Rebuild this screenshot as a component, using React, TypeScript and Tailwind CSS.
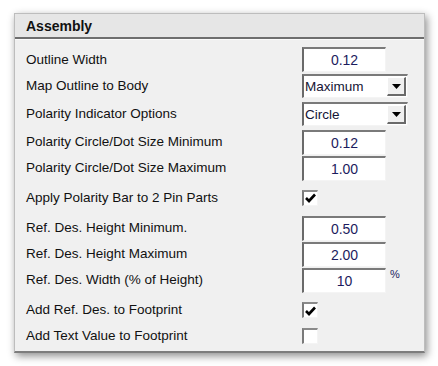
import React from "react";

const font = { fontFamily: '"Liberation Sans", Arial, sans-serif' };

function NumBox({ value }: { value: string }) {
  return (
    <div className="w-[84px] h-[25px] bg-white border-t-2 border-l-2 border-t-[#7a7a7a] border-l-[#6a6a6a] border-r border-b border-r-[#f4f4f4] border-b-[#f4f4f4] flex items-center justify-center text-[14px] text-[#1c1c5e] leading-none">
      {value}
    </div>
  );
}

function Select({ value }: { value: string }) {
  return (
    <div className="w-[106px] h-[24px] bg-white border-t-2 border-l-2 border-t-[#7a7a7a] border-l-[#6a6a6a] border-r border-b border-r-[#f4f4f4] border-b-[#f4f4f4] flex items-stretch">
      <div className="flex-1 flex items-center pl-[1px] text-[13.5px] text-[#151535] leading-none">{value}</div>
      <div className="w-[19px] my-[1px] mr-[1px] bg-[#f0f0f0] border-t border-l border-t-white border-l-white border-r-2 border-b-2 border-r-[#6a6a6a] border-b-[#6a6a6a] flex items-center justify-center">
        <svg width="9" height="5" viewBox="0 0 9 5">
          <polygon points="0,0 9,0 4.5,5" fill="#000" />
        </svg>
      </div>
    </div>
  );
}

function Check({ checked }: { checked: boolean }) {
  return (
    <div className="w-[16px] h-[16px] bg-white border-t-2 border-l-2 border-t-[#8a8a8a] border-l-[#7a7a7a] border-r border-b border-r-[#f4f4f4] border-b-[#f4f4f4] flex items-center justify-center">
      {checked && (
        <svg width="11" height="10" viewBox="0 0 11 10">
          <path d="M1 5 L4 8 L10 1.5" stroke="#000" strokeWidth="2.6" fill="none" />
        </svg>
      )}
    </div>
  );
}

type Row = { label: string; h: number; ctl: React.ReactNode; extra?: React.ReactNode };

export default function App() {
  const rows: Row[] = [
    { label: "Outline Width", h: 27, ctl: <NumBox value="0.12" /> },
    { label: "Map Outline to Body", h: 26, ctl: <Select value="Maximum" /> },
    { label: "Polarity Indicator Options", h: 30, ctl: <Select value="Circle" /> },
    { label: "Polarity Circle/Dot Size Minimum", h: 26, ctl: <NumBox value="0.12" /> },
    { label: "Polarity Circle/Dot Size Maximum", h: 26, ctl: <NumBox value="1.00" /> },
    { label: "Apply Polarity Bar to 2 Pin Parts", h: 33, ctl: <Check checked /> },
    { label: "Ref. Des. Height Minimum.", h: 28, ctl: <NumBox value="0.50" /> },
    { label: "Ref. Des. Height Maximum", h: 24, ctl: <NumBox value="2.00" /> },
    {
      label: "Ref. Des. Width (% of Height)",
      h: 28,
      ctl: <NumBox value="10" />,
      extra: <span className="self-start mt-[1px] ml-[4px] text-[11px] text-[#1c1c5e] leading-none">%</span>,
    },
    { label: "Add Ref. Des. to Footprint", h: 32, ctl: <Check checked /> },
    { label: "Add Text Value to Footprint", h: 20, ctl: <Check checked={false} /> },
  ];

  return (
    <div className="w-[438px] h-[366px] bg-white pt-[13px] pl-[14px]" style={font}>
      <div className="w-[411px] h-[340px] bg-[#f0f0f0] border border-[#bdbdbd] border-b-2 border-b-[#7d7d7d] shadow-[2px_3px_8px_rgba(0,0,0,0.45)] flex flex-col">
        <div className="h-[23px] bg-[#e6e6e6] flex items-center pl-[11px] text-[14px] font-bold text-[#111] leading-none">
          Assembly
        </div>
        <div className="h-[2px] bg-[#6e6e6e]" />
        <div className="h-[1px] bg-[#fbfbfb]" />
        <div className="h-[6px]" />
        <div className="flex flex-col">
          {rows.map((r, i) => (
            <div key={i} className="flex items-center" style={{ height: r.h }}>
              <div className="w-[287px] pl-[11px] text-[13.5px] text-[#111] leading-none whitespace-nowrap">{r.label}</div>
              <div className="flex items-center">
                {r.ctl}
                {r.extra}
              </div>
            </div>
          ))}
        </div>
      </div>
    </div>
  );
}
